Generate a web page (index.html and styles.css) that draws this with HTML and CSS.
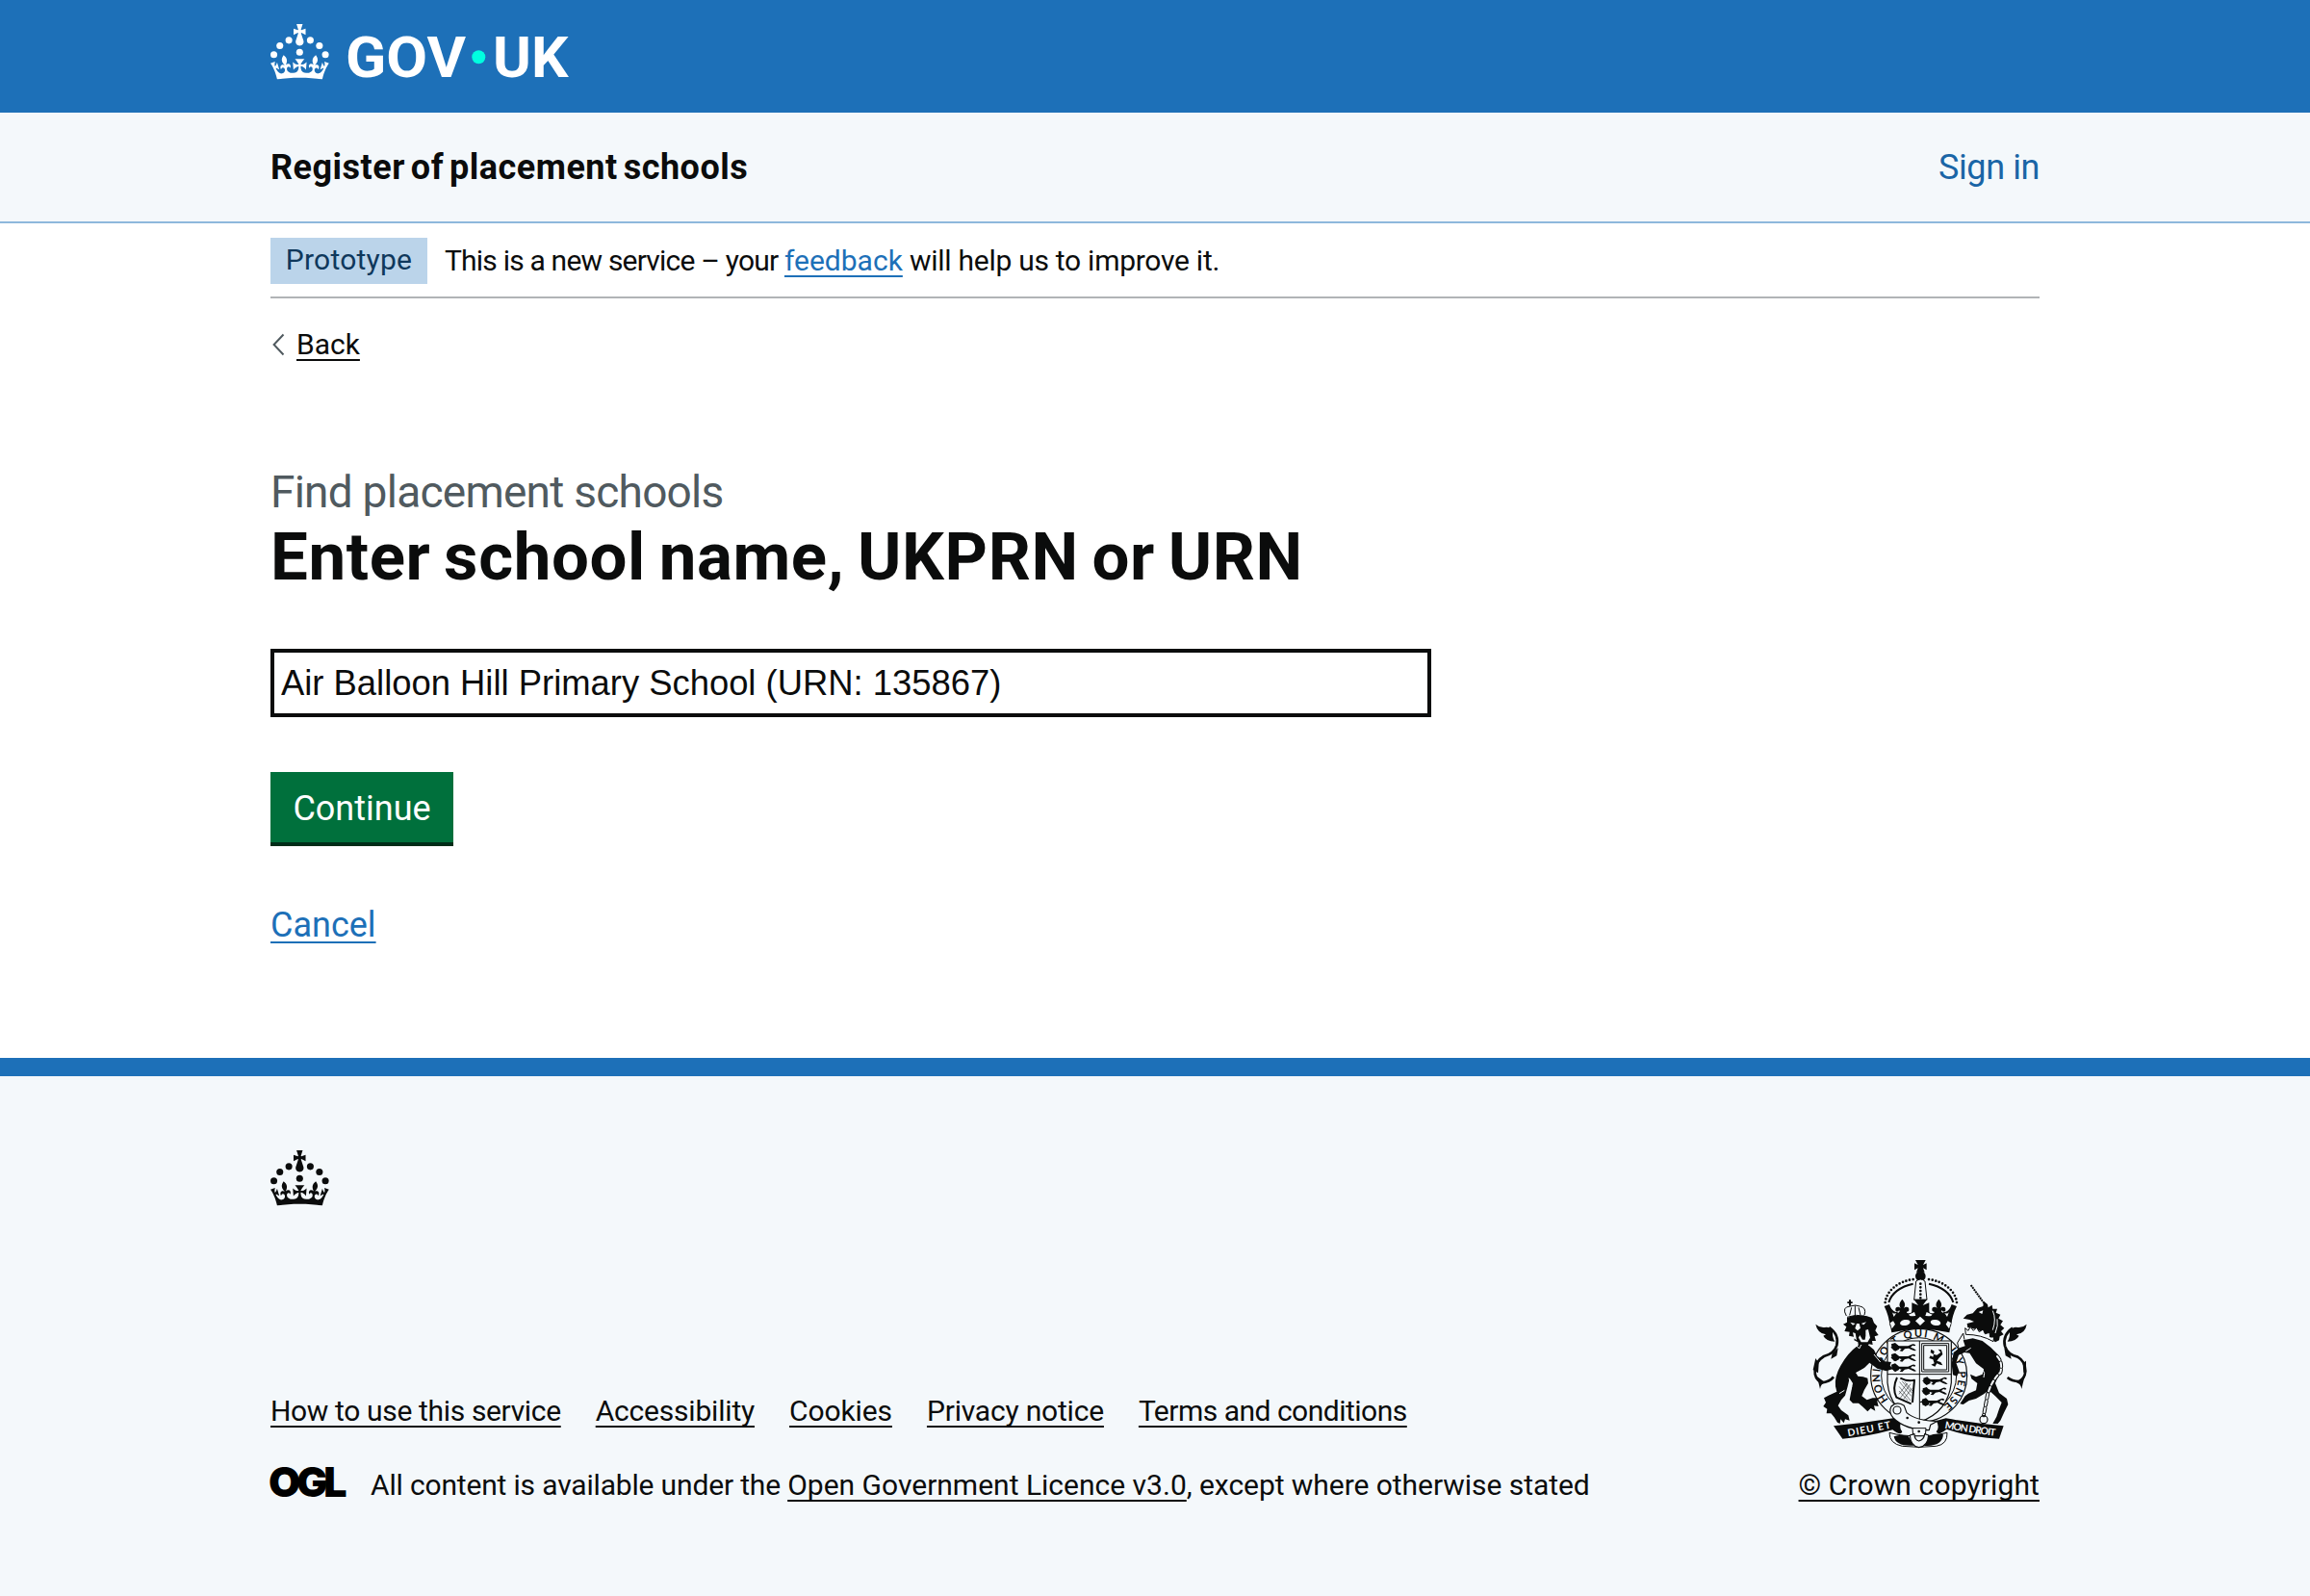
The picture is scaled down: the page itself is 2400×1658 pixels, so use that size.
FILE: index.html
```html
<!DOCTYPE html>
<html lang="en">
<head>
<meta charset="utf-8">
<title>Enter school name, UKPRN or URN - Register of placement schools - GOV.UK</title>
<link rel="stylesheet" href="styles.css">
</head>
<body>
<svg class="defs" width="0" height="0" aria-hidden="true">
  <symbol id="crown" viewBox="0 0 64 60">
    <circle cx="20" cy="17.6" r="3.7"/><circle cx="10.2" cy="23.5" r="3.7"/><circle cx="3.7" cy="33.2" r="3.7"/><circle cx="31.7" cy="30.6" r="3.7"/><circle cx="43.3" cy="17.6" r="3.7"/><circle cx="53.2" cy="23.5" r="3.7"/><circle cx="59.7" cy="33.2" r="3.7"/>
    <path d="M33.1,9.8c.2-.1.3-.3.5-.5l4.6,2.4v-6.8l-4.6,1.5c-.1-.2-.3-.3-.5-.5l1.9-5.9h-6.7l1.9,5.9c-.2.1-.3.3-.5.5l-4.6-1.5v6.8l4.6-2.4c.1.2.3.3.5.5l-2.6,8c-.9,2.8,1.2,5.7,4.1,5.7h0c3,0,5.1-2.9,4.1-5.7l-2.6-8ZM37,37.9s-3.4,3.8-4.1,6.1c2.2,0,4.2-.5,6.4-2.8l-.7,8.5c-2-2.8-4.4-4.1-5.7-3.8.1,3.1.5,6.7,5.8,7.2,3.7.3,6.7-1.5,7-3.8.4-2.6-2-4.3-3.7-1.6-1.4-4.5,2.4-6.1,4.9-3.2-1.9-4.5-1.8-7.7,2.4-10.9,3,4,2.6,7.3-1.2,11.1,2.4-1.3,6.2,0,4,4.6-1.2-2.8-3.7-2.2-4.2.2-.3,1.7.7,3.7,3,4.2,1.9.3,4.7-.9,7-5.9-1.3,0-2.4.7-3.9,1.7l2.4-8c.6,2.3,1.4,3.7,2.2,4.5.6-1.6.5-2.8,0-5.3l5,1.8c-2.6,3.6-5.2,8.7-7.3,17.5-7.4-1.1-15.7-1.7-24.5-1.7h0c-8.8,0-17.1.6-24.5,1.7-2.1-8.9-4.7-13.9-7.3-17.5l5-1.8c-.5,2.5-.6,3.7,0,5.3.8-.8,1.6-2.3,2.2-4.5l2.4,8c-1.5-1-2.6-1.7-3.9-1.7,2.3,5,5.2,6.2,7,5.9,2.3-.4,3.3-2.4,3-4.2-.5-2.4-3-3.1-4.2-.2-2.2-4.6,1.6-6,4-4.6-3.7-3.7-4.2-7.1-1.2-11.1,4.2,3.2,4.3,6.4,2.4,10.9,2.5-2.8,6.3-1.3,4.9,3.2-1.8-2.7-4.1-1-3.7,1.6.3,2.3,3.3,4.1,7,3.8,5.4-.5,5.7-4.2,5.8-7.2-1.3-.2-3.7,1-5.7,3.8l-.7-8.5c2.2,2.3,4.2,2.7,6.4,2.8-.7-2.3-4.1-6.1-4.1-6.1h10.6Z"/>
  </symbol>
</svg>

<header class="header">
  <div class="container">
    <a class="header__link" href="#" aria-label="GOV.UK">
      <svg class="header__logo" width="312" height="60" viewBox="0 0 312 60">
        <use href="#crown" width="61.2" height="57.4"/>
        <text x="78" y="55" textLength="125" lengthAdjust="spacingAndGlyphs">GOV</text>
        <circle class="header__dot" cx="216.3" cy="34.3" r="7"/>
        <text x="231" y="55" textLength="78.5" lengthAdjust="spacingAndGlyphs">UK</text>
      </svg>
    </a>
  </div>
</header>

<div class="service">
  <div class="container service__row">
    <span class="service__name">Register of placement schools</span>
    <a class="service__link" href="#">Sign in</a>
  </div>
</div>

<div class="container">
  <div class="phase">
    <strong class="phase__tag">Prototype</strong>
    <span class="phase__text"><span class="phase__lead">This is a new service – your </span><a class="link" href="#">feedback</a><span class="phase__tail"> will help us to improve it.</span></span>
  </div>
  <a class="back" href="#">
    <svg class="back__arrow" width="14" height="24" viewBox="0 0 14 24"><path d="M12.5 1.5 2.6 12l9.9 10.5"/></svg>
    <span class="back__text">Back</span>
  </a>
  <main class="main">
    <span class="caption">Find placement schools</span>
    <h1 class="title">Enter school name, UKPRN or URN</h1>
    <input class="input" type="text" aria-label="School" value="Air Balloon Hill Primary School (URN: 135867)">
    <button class="button" type="button">Continue</button>
    <a class="link cancel" href="#">Cancel</a>
  </main>
</div>

<footer class="footer">
  <div class="container">
    <svg class="footer__crown" width="61.2" height="57.4" aria-hidden="true"><use href="#crown" width="61.2" height="57.4"/></svg>
    <div class="footer__meta">
      <div class="footer__left">
        <nav class="footer__links">
          <a class="footer__link--help" href="#">How to use this service</a>
          <a class="footer__link--access" href="#">Accessibility</a>
          <a class="footer__link--cookies" href="#">Cookies</a>
          <a class="footer__link--privacy" href="#">Privacy notice</a>
          <a class="footer__link--terms" href="#">Terms and conditions</a>
        </nav>
        <div class="licence">
          <svg class="licence__logo" width="80" height="34" viewBox="0 0 80 34"><text x="-2" y="32" textLength="81.5" lengthAdjust="spacing">OGL</text></svg>
          <span class="licence__text"><span class="licence__lead">All content is available under the </span><a href="#">Open Government Licence v3.0</a><span class="licence__tail">, except where otherwise stated</span></span>
        </div>
      </div>
      <a class="copyright" href="#">
        <svg class="arms" width="224" height="198" viewBox="70 50 672 594" aria-hidden="true">
          <defs>
            <path id="garter" d="M309 493A122 120 0 1 1 463 520"/>
            <path id="mottoL" d="M182 606Q250 594 322 578"/>
            <path id="mottoR" d="M482 580Q560 594 646 605"/>
            <g id="passant"><path d="M0 8q6-8 14-4l8 2h26l14-6q8-2 10 4l-4 2-6-2-6 6 10 4 8 6-6 1-10-4-8-4-12 2-8 8-8-2 6-6-8-2-10 8-8-2 6-6-4-2-6 2-4-4z"/></g>
            <g id="fleur"><path d="M0-30c9 10 11 18 5 28 6-7 18-5 16 6-1 6-10 6-11 0-4 4-2 10 5 14v12h-30v-12c7-4 9-10 5-14-1 6-10 6-11 0-2-11 10-13 16-6-6-10-4-18 5-28z"/></g>
          </defs>

          <!-- crown -->
          <path d="M391 56h32l-8 15 11-5v21l-11-6 5 13h-26l5-13-11 6V66l11 5z"/>
          <circle cx="407" cy="106" r="16"/>
          <path class="dots" d="M297 188c4-36 40-66 88-72M520 188c-4-36-40-66-88-72"/>
          <path class="s6" d="M308 188c8-28 36-50 76-58M509 188c-8-28-36-50-76-58"/>
          <path class="k s3" d="M393 122q14-12 28 0l6 58h-40z"/>
          <path class="dots" d="M407 130v50"/>
          <path d="M294 200l16-6q6 20 20 24l58-14h38l58 14q14-4 20-24l16 6q-14 28-18 62-97-26-190 0-4-34-18-62z"/>
          <path class="k" d="M326 204q6 16 12 16 8-2 8-10l-12-8zM366 202q2 12-2 18 10 4 16-2l4-18zM488 204q-6 16-12 16-8-2-8-10l12-8zM448 202q-2 12 2 18-10 4-16-2l-4-18z"/>
          <use href="#fleur" x="350" y="208"/><use href="#fleur" x="464" y="208"/>
          <path d="M386 178h42l-14 19 20-8v30l-20-8 6 24h-26l6-24-20 8v-30l20 8z"/>
          <path class="k" d="M318 217q4 9 14 4l-8 12zM496 217q-4 9-14 4l8 12zM370 226q10 12 22 4l-4-12zM444 226q-10 12-22 4l4-12z"/>
          <path d="M309 240q98-22 196 0l-8 42q-90-20-180 0z"/>
          <path class="k" d="M406 232l15 14-15 14-15-14zM312 252l10-6 6 10-10 14zM502 252l-10-6-6 10 10 14z"/>
          <ellipse class="k" cx="359" cy="251" rx="16" ry="9" transform="rotate(-10 359 251)"/><ellipse class="k" cx="454" cy="251" rx="16" ry="9" transform="rotate(10 454 251)"/>

          <!-- ribbon and base -->
          <path d="M136 573q90-8 186-24l26 8q-10 20 2 34-4 14-30-6-80 22-156 28z"/>
          <path d="M666 573q-90-8-180-24l-30 8q12 20 0 34 6 14 32-8 70 24 164 30z"/>
          <path class="k s3" d="M310 594q0 34 40 42 54 6 106 0 36-6 34-42-40 12-80 10-60 2-100-10z"/>
          <path d="M324 606q24-10 46 0l16 28q-56 4-62-28zM478 600q-24-6-44 4l-20 30q60 6 64-34z"/>

          <!-- garter -->
          <ellipse class="k s4" cx="402" cy="416" rx="150" ry="146"/>
          <ellipse class="k s3" cx="402" cy="416" rx="117" ry="118"/>
          <text class="arms__garter"><textPath href="#garter" startOffset="2" textLength="570" lengthAdjust="spacing">HONI SOIT QUI MAL Y PENSE</textPath></text>

          <!-- shield -->
          <path class="k s4" d="M304 308h199v130q-10 92-98 122-92-30-101-122z"/>
          <path class="s3" d="M404 308v250M304 412h199M417 322h72v76h-72zM411 316h84v88h-84z"/>
          <use href="#passant" x="320" y="318"/><use href="#passant" x="320" y="350"/><use href="#passant" x="320" y="382"/>
          <path d="M316 318l12-4 10 8 2 12-12 6-10-8zM316 350l12-4 10 8 2 12-12 6-10-8zM316 382l12-4 10 8 2 12-12 6-10-8z"/>
          <use href="#passant" x="418" y="422"/><use href="#passant" x="416" y="454"/><use href="#passant" x="410" y="488"/>
          <path d="M416 424l12-4 8 8 2 12-12 6-10-8zM414 456l12-4 8 8 2 12-12 6-10-8zM412 490l12-4 8 8 2 12-12 6-10-8z"/>
          <path d="M440 334l10 6-2 10 10 2 12-8-8-10 10 2 4 14-12 12-6 8 12 4 6 10-8-2-10-4-6 10-12-6 10-4-4-12-12-4 4-8 8 4 2-8-10-6z"/>
          <path class="s6" d="M344 424q24 12 44 6-4 42-6 70M334 422q-16 34-2 62l46 20"/>
          <path class="s2" d="M342 436l36 44M350 434l30 36M340 450l36 44M358 436l24 28M340 464l28 30M376 442l-32 44M380 456l-26 34M366 440l-26 34"/>

          <!-- buckle -->
          <path class="k s4" d="M316 512q18-18 40-2l8 22q30 26 96 26l-22 12-4 16q-74 0-112-38-16-18-6-36z"/>
          <circle class="k s4" cx="334" cy="524" r="12"/>
          <path class="k s3" d="M382 580h42l-2 24h-38z"/>
          <circle cx="366" cy="548" r="4"/><circle cx="402" cy="562" r="4"/><circle cx="402" cy="590" r="4"/>
          <path class="k s4" d="M374 602l14-4q0 18 14 22 16-4 18-22l12 4q-2 34-30 38-26-4-28-38z"/>

          <!-- lion -->
          <path class="s3" d="M176 230q-16-28 12-30 16-6 30 0 22 4 14 28M178 234q28-10 54-4M203 198v30M187 184v16M192 204l-6 24M214 204l6 24"/>
          <path d="M179 186h16v5h-16zM184 180h6v18h-6z"/>
          <path d="M178 236l18-6 42 0 18 6 6 16 10 10-6 14 10 14-12 4 4 14-12 0 2 12-12-2-6 12-14-8-12 4-2-14-12-6 2-10-18-4 2-12-16-2 6-14-10-8 12-6z"/>
          <path d="M212 322Q180 345 158 385Q138 420 142 450L146 466 120 478 106 486 112 500 104 512 116 520 114 534 128 534 138 546 148 562 156 566 158 552 168 564 172 552 186 556 182 540 160 524 150 510 160 492 172 478 180 450 186 424 196 440 190 470 186 492 196 502 214 502 228 514 242 528 252 518 266 526 262 510 276 512 272 496 278 486 258 486 240 492 224 480 232 460 244 440 242 424 228 420 212 418 206 408 232 392 248 376 272 394 300 402 320 396 312 384 316 374 296 372 272 356 262 336 246 322Z"/>
          <path class="k" d="M188 250l16 4-8 5zM222 254l16-5-8 9zM208 254h8l4 14-9 8-8-7zM196 282l8 2 4 22-8-6zM236 274l8-2 6 26-8 14-20 0-8-14 4-8 8 14h8l2-12z"/>
          <path class="kline" d="M204 318l12 14 6-12M184 424l8 26-6 20M206 408l28-14M262 350l20 24M170 462l-16 10"/>
          <path class="s8" d="M122 266q32 22 24 56-8 26-40 34-24 14-28 44-2 26 20 38 26-2 38-18"/>
          <path d="M80 256q14 12 28 10 14-4 26 10-4 20 6 34-28-2-36-18l8-4q-26-4-32-32zM150 330l-4 24-18 10 4-18zM72 398l8-36 10 16-2 30zM84 418q6 22 10 40 2-16 16-20z"/>

          <!-- unicorn -->
          <path class="horn" d="M564 134l42 58"/>
          <path d="M540 238L552 226 570 222 584 206 602 200 604 184 616 194 618 204 630 196 632 208 646 208 642 220 656 226 650 238 664 246 656 258 668 268 658 278 666 288 654 294 652 306 640 312 628 300 606 284 580 272 554 266 552 254 574 248 560 242Z"/>
          <path d="M540 306L570 300 600 308 626 328 648 350 656 380 652 410 640 440 652 470 676 488 680 506 668 530 656 556 648 566 632 566 644 544 652 520 660 500 640 480 620 462 604 474 580 488 558 494 540 506 530 504 546 480 556 472 580 462 584 440 566 426 562 412 580 420 600 412 604 396 580 378 560 346 544 344 526 352 518 376 528 404 520 418 508 414 504 380 510 344 528 330 546 324Z"/>
          <path class="k" d="M588 218l14-5-3 11z"/>
          <path class="kline" d="M632 214q12 26 0 60M646 240q4 20-6 44M600 396q10 12 4 26M548 340l16-10"/>
          <path class="k s3" d="M546 268l10 8 6-12 10 12 10-10 8 14 12-8 6 14 14-4 2 14 12 0-2 14q-38-22-86-22z"/>
          <path class="s3" d="M528 340l-6-26 18-30 4 20"/>
          <path class="chain" d="M646 356q18 20 10 50-28 26-40 70l-12 64"/>
          <path class="chain chain--hole" d="M646 356q18 20 10 50-28 26-40 70l-12 64"/>
          <circle class="s4" cx="604" cy="553" r="12"/>
          <path class="s8" d="M694 268q-32 22-24 56 8 26 40 34 24 14 24 44-2 24-20 32-22 0-36-12"/>
          <path d="M738 256q-14 12-28 10-14-4-26 10 4 20-6 34 28-2 36-18l-8-4q28-4 32-32zM668 330l4 24 18 10-4-18zM736 398l0-28-10 8 2 30zM732 418q-6 22-10 40-2-16-16-20z"/>

          <text class="arms__motto"><textPath href="#mottoL" textLength="136">DIEU ET</textPath></text>
          <text class="arms__motto"><textPath href="#mottoR" textLength="160">MON DROIT</textPath></text>
        </svg>
        <span class="copyright__text">© Crown copyright</span>
      </a>
    </div>
  </div>
</footer>
</body>
</html>
```
FILE: styles.css
```css
* { box-sizing: border-box; }

body {
  margin: 0;
  min-height: 1658px;
  display: flex;
  flex-direction: column;
  background: #fff;
  color: #0b0c0c;
  font-family: Roboto, "Liberation Sans", sans-serif;
  font-size: 30px;
  line-height: 40px;
  font-variant-ligatures: none;
}

a {
  color: inherit;
  text-decoration-thickness: 2px;
  text-underline-offset: 5px;
  text-decoration-skip-ink: none;
}

svg { overflow: visible; }
.defs { position: absolute; }
.container { width: 1838px; margin: 0 auto; }
.link { color: #1d70b8; }

.header { height: 117px; background: #1d70b8; }
.header__link { display: block; padding-top: 25px; text-decoration: none; }
.header__logo { display: block; fill: #fff; font-size: 58.6px; font-weight: 700; }
.header__dot { fill: #00ffe0; }

.service { height: 115px; background: #f4f8fb; border-bottom: 2px solid #8eb8dc; }
.service__row {
  height: 113px;
  display: flex;
  align-items: center;
  justify-content: space-between;
  font-size: 36px;
}
.service__name { font-weight: 700; letter-spacing: 0.5px; word-spacing: -3.5px; }
.service__link { color: #1a65a6; text-decoration: none; letter-spacing: -0.4px; }

.phase {
  display: flex;
  align-items: center;
  gap: 18px;
  padding: 15px 0 13px;
  border-bottom: 2px solid #b1b4b6;
}
.phase__tag {
  width: 163px;
  height: 48px;
  padding-bottom: 2px;
  line-height: 46px;
  text-align: center;
  font-weight: 400;
  letter-spacing: 0.25px;
  color: #0f385c;
  background: #bbd4ea;
}
.phase__text { white-space: pre; padding-bottom: 1px; }
.phase__lead { letter-spacing: -0.8px; }
.phase__tail { letter-spacing: -0.27px; }

.back { display: inline-flex; align-items: center; gap: 12px; margin-top: 28px; text-decoration: none; }
.back__arrow { margin-left: 1px; fill: none; stroke: #505a5f; stroke-width: 2; }
.back__text { text-decoration: underline 2px; text-underline-offset: 5px; }

.main { display: flex; flex-direction: column; align-items: flex-start; padding-top: 104px; }
.caption { font-size: 46px; line-height: 54px; letter-spacing: -0.75px; color: #505a5f; }
.title { margin: 1px 0 55px; font-size: 69px; line-height: 80px; font-weight: 700; letter-spacing: 0.6px; word-spacing: -4px; }
.input {
  width: 1206px;
  height: 71px;
  padding: 0 7px;
  border: 4px solid #0b0c0c;
  border-radius: 0;
  background: #fff;
  color: #0b0c0c;
  font: 36.4px "Liberation Sans", Arial, sans-serif;
}
.button {
  width: 190px;
  height: 77px;
  margin: 57px 0 58px;
  padding: 3px 0 0;
  border: 0;
  border-bottom: 4px solid #002d18;
  background: #00703c;
  color: #fff;
  font: 36px/70px Roboto, "Liberation Sans", sans-serif;
}
.cancel { font-size: 36px; line-height: 48px; }

.footer {
  flex: 1;
  margin-top: 114px;
  padding-top: 77px;
  border-top: 19px solid #1d70b8;
  background: #f4f8fb;
}
.footer__crown { display: block; fill: #0b0c0c; }
.footer__meta { display: flex; align-items: flex-end; justify-content: space-between; margin-top: 55px; }
.footer__links { display: flex; gap: 36px; margin-bottom: 37px; }
.footer__link--help { letter-spacing: -0.35px; }
.footer__link--access { letter-spacing: -0.2px; }
.footer__link--cookies { letter-spacing: -0.1px; }
.footer__link--privacy { letter-spacing: -0.2px; }
.footer__link--terms { letter-spacing: -0.5px; }
.licence { display: flex; gap: 24px; }
.licence__logo { font: 900 43px Inter, sans-serif; }
.licence__text { white-space: pre; }
.licence__lead { letter-spacing: -0.17px; }
.licence__tail { letter-spacing: -0.05px; }

.copyright { display: flex; flex-direction: column; align-items: center; gap: 18px; text-decoration: none; letter-spacing: 0.12px; }
.copyright__text { text-decoration: underline 2px; text-underline-offset: 5px; text-decoration-skip-ink: none; }

.arms { display: block; margin-left: 3px; fill: #0b0c0c; stroke-linejoin: round; letter-spacing: 0; }
.k { fill: #f4f8fb; }
.s2, .s3, .s4, .s6, .s8 { stroke: #0b0c0c; }
.s2:not(.k), .s3:not(.k), .s4:not(.k), .s6, .s8 { fill: none; }
.s2 { stroke-width: 1.5; }
.s3 { stroke-width: 3; }
.s4 { stroke-width: 3.5; }
.s6 { stroke-width: 6; }
.s8 { stroke-width: 8; }
.kline { fill: none; stroke: #f4f8fb; stroke-width: 3; }
.horn { fill: none; stroke: #0b0c0c; stroke-width: 6; stroke-dasharray: 6 2; }
.dots { fill: none; stroke: #0b0c0c; stroke-width: 8; stroke-linecap: round; stroke-dasharray: 0 11; }
.chain { fill: none; stroke: #0b0c0c; stroke-width: 12; stroke-dasharray: 14 8; stroke-linecap: round; }
.chain--hole { stroke: #f4f8fb; stroke-width: 6; }
.arms__garter { font: 700 33px Lato, sans-serif; }
.arms__motto { font: 700 31px Lato, sans-serif; fill: #f4f8fb; }
```
